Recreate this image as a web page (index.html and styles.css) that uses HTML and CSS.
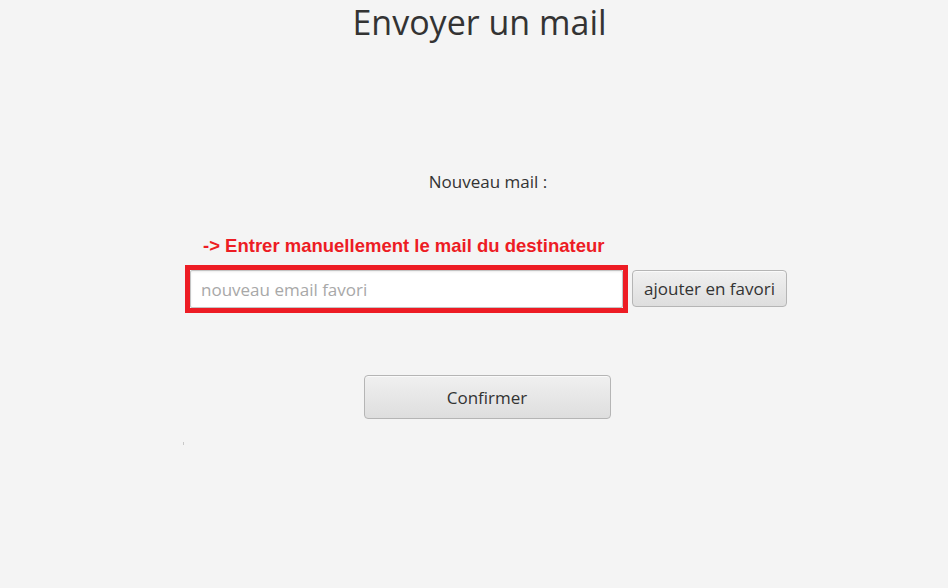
FILE: index.html
```html
<!DOCTYPE html>
<html lang="fr">
<head>
<meta charset="utf-8">
<link rel="stylesheet" href="styles.css">
</head>
<body>
<main class="page">
  <h1 class="title">Envoyer un mail</h1>
  <p class="subtitle">Nouveau mail :</p>
  <section class="form">
    <p class="hint">-&gt; Entrer manuellement le mail du destinateur</p>
    <div class="row">
      <div class="highlight">
        <input class="field" type="text" placeholder="nouveau email favori">
      </div>
      <button class="btn btn-fav">ajouter en favori</button>
    </div>
  </section>
  <button class="btn btn-confirm">Confirmer</button>
  <span class="dot"></span>
</main>
</body>
</html>
```
FILE: styles.css
```css
html, body {
  margin: 0;
  padding: 0;
  background: #f4f4f4;
}
body {
  width: 948px;
  height: 588px;
  overflow: hidden;
  font-family: "Open Sans", "Noto Sans", sans-serif;
  color: #333;
}
.page {
  display: flex;
  flex-direction: column;
  align-items: center;
}
.title {
  margin: 0 0 0 11px;
  font-size: 34px;
  font-weight: 400;
  line-height: 44px;
  color: #333;
}
.subtitle {
  margin: 128px 0 0 28px;
  font-size: 17px;
  line-height: 20px;
  color: #333;
}
.form {
  align-self: flex-start;
  display: flex;
  flex-direction: column;
  margin: 44px 0 0 185px;
}
.hint {
  margin: 0 0 9px 18px;
  font-family: "Liberation Sans", Arial, sans-serif;
  font-weight: 700;
  font-size: 18.5px;
  line-height: 20px;
  color: #ed1c24;
}
.row {
  display: flex;
  align-items: flex-start;
  gap: 4px;
}
.highlight {
  border: 5px solid #ed1c24;
  display: flex;
}
.field {
  box-sizing: border-box;
  width: 433px;
  height: 38px;
  margin: 0;
  padding: 0 10px;
  border: 1px solid #c4c4c4;
  border-radius: 2px;
  background: #fff;
  box-shadow: inset 0 1px 2px rgba(0,0,0,0.08);
  font-family: "Open Sans", "Noto Sans", sans-serif;
  font-size: 17px;
  color: #333;
  outline: none;
}
.field::placeholder {
  color: #a8a8a8;
}
.btn {
  box-sizing: border-box;
  margin: 0;
  border: 1px solid #b5b5b5;
  border-radius: 4px;
  background: linear-gradient(#f0f0f0, #dedede);
  box-shadow: inset 0 1px 0 #fafafa;
  font-family: "Open Sans", "Noto Sans", sans-serif;
  font-size: 17px;
  color: #333;
  padding: 0;
}
.btn-fav {
  width: 155px;
  height: 37px;
  margin-top: 5px;
}
.btn-confirm {
  width: 247px;
  height: 44px;
  margin-top: 62px;
  margin-left: 26px;
}
.dot {
  align-self: flex-start;
  margin: 23px 0 0 183px;
  width: 1px;
  height: 3px;
  background: #c8c8c8;
}
```
